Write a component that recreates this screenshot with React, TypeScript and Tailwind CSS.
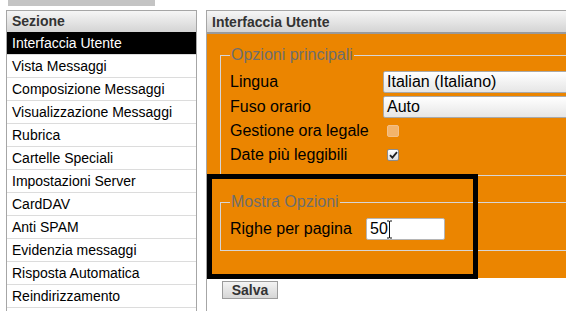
import React from 'react';

const sections = [
  'Interfaccia Utente',
  'Vista Messaggi',
  'Composizione Messaggi',
  'Visualizzazione Messaggi',
  'Rubrica',
  'Cartelle Speciali',
  'Impostazioni Server',
  'CardDAV',
  'Anti SPAM',
  'Evidenzia messaggi',
  'Risposta Automatica',
  'Reindirizzamento',
  '',
];

const SelectBox: React.FC<{ value: string }> = ({ value }) => (
  <div className="h-[22px] w-[300px] rounded-[2px] border border-[#a9a9a9] bg-gradient-to-b from-white to-[#e6e6e6] pl-[3px] text-[16px] leading-[20px] text-black">
    {value}
  </div>
);

export default function App() {
  return (
    <div className="relative h-[311px] w-[566px] overflow-hidden bg-white font-['Liberation_Sans',Arial,sans-serif]">
      {/* leftover tab strip */}
      <div className="ml-[8px] h-[6px] w-[147px] bg-[#c4c4c4]" />

      <div className="mt-[4px] flex items-start pl-[6px]">
        {/* Sezioni */}
        <div className="w-[191px] shrink-0 border border-[#a6a6a6]">
          <div className="h-[21px] bg-gradient-to-b from-[#f6f6f6] to-[#d4d4d4] pl-[5px] text-[14px] font-bold leading-[21px] text-[#333]">
            Sezione
          </div>
          {sections.map((s, i) => (
            <div
              key={i}
              className={`h-[23px] border-b border-[#dcdcdc] pl-[5px] text-[14px] leading-[22px] ${
                i === 0 ? 'bg-black text-white' : 'bg-white text-black'
              }`}
            >
              {s}
            </div>
          ))}
        </div>

        {/* Impostazioni */}
        <div className="ml-[9px] h-[320px] w-[500px] shrink-0 border-l border-t border-[#a6a6a6]">
          <div className="h-[23px] border-b-2 border-[#9a9a9a] bg-gradient-to-b from-[#f6f6f6] to-[#d4d4d4] pl-[5px] text-[14px] font-bold leading-[22px] text-[#333]">
            Interfaccia Utente
          </div>

          <div className="bg-[#eb8500] pb-[27px] pt-[12px]">
            <fieldset className="ml-[13px] w-[480px] border border-[#d6d6d6] pb-[8px] pl-[9px] pt-[5px]">
              <legend className="px-[1px] text-[16px] leading-[18px] text-[#6e6e6e]">Opzioni principali</legend>
              <div className="flex h-[25px] items-center text-[16px] text-black">
                <span className="w-[153px]">Lingua</span>
                <SelectBox value="Italian (Italiano)" />
              </div>
              <div className="flex h-[25px] items-center text-[16px] text-black">
                <span className="w-[153px]">Fuso orario</span>
                <SelectBox value="Auto" />
              </div>
              <div className="flex h-[24px] items-center text-[16px] text-black">
                <span className="w-[157px]">Gestione ora legale</span>
                <span className="h-[12px] w-[12px] rounded-[2px] border border-[#f2c089] bg-[#f3b46c]" />
              </div>
              <div className="flex h-[24px] items-center text-[16px] text-black">
                <span className="w-[157px]">Date più leggibili</span>
                <span className="flex h-[12px] w-[12px] items-center justify-center rounded-[2px] border border-[#8c8c8c] bg-gradient-to-b from-white to-[#dcdcdc]">
                  <svg width="9" height="8" viewBox="0 0 9 8">
                    <path d="M1 4.2 L3.4 6.6 L8 1.2" fill="none" stroke="#222" strokeWidth="1.8" />
                  </svg>
                </span>
              </div>
            </fieldset>

            <fieldset className="ml-[13px] mt-[17px] w-[480px] border border-[#d6d6d6] pb-[9px] pl-[9px] pt-[5px]">
              <legend className="px-[1px] text-[16px] leading-[18px] text-[#6e6e6e]">Mostra Opzioni</legend>
              <div className="flex h-[25px] items-center text-[16px] text-black">
                <span className="w-[136px]">Righe per pagina</span>
                <div className="relative h-[22px] w-[79px] rounded-[2px] border border-[#b5b5b5] bg-white pl-[3px] text-[16px] leading-[20px] text-black">
                  50
                  <svg className="absolute left-[19px] top-[1px]" width="7" height="19" viewBox="0 0 7 19">
                    <path d="M1 1 H3 Q3.5 1 3.5 2 V17 Q3.5 18 3 18 H1 M6 1 H4 Q3.5 1 3.5 2 M6 18 H4 Q3.5 18 3.5 17" fill="none" stroke="#fff" strokeWidth="2.4" />
                    <path d="M1 1 H3 Q3.5 1 3.5 2 V17 Q3.5 18 3 18 H1 M6 1 H4 Q3.5 1 3.5 2 M6 18 H4 Q3.5 18 3.5 17" fill="none" stroke="#111" strokeWidth="1" />
                  </svg>
                </div>
              </div>
            </fieldset>
          </div>

          <button className="ml-[15px] mt-[2px] h-[18px] w-[56px] border border-[#9c9c9c] bg-gradient-to-b from-[#f4f4f4] to-[#d6d6d6] text-[14px] font-bold leading-[16px] text-[#333]">
            Salva
          </button>
        </div>
      </div>

      {/* annotation box */}
      <div className="absolute left-[207px] top-[174px] h-[105px] w-[271px] border-[5px] border-black" />
    </div>
  );
}
